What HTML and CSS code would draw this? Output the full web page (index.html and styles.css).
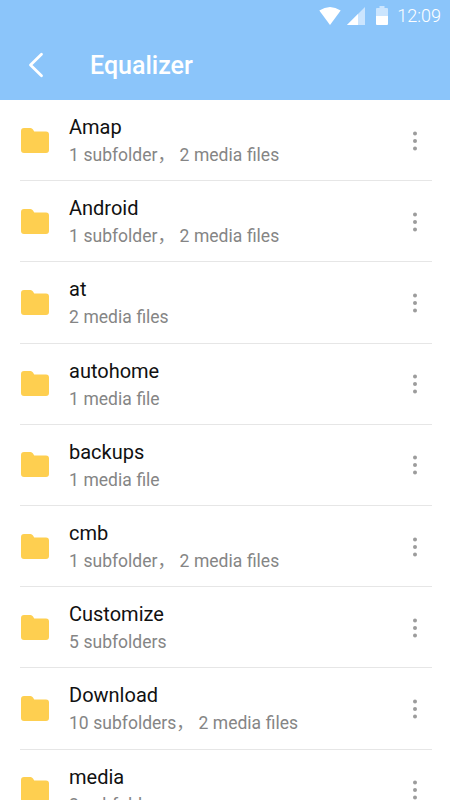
FILE: index.html
```html
<!DOCTYPE html>
<html lang="en">

<head>
    <meta charset="UTF-8">
    <meta name="viewport" content="width=device-width, initial-scale=1.0">
    <title>Equalizer</title>
    <link rel="stylesheet" href="styles.css">
</head>

<body>
    <svg class="symbols">
        <symbol id="folder" viewBox="0 0 28 25">
            <path d="M3 0H9.5Q11 0 12 1.5L13.2 3.4H25Q28 3.4 28 6.4V22Q28 25 25 25H3Q0 25 0 22V3Q0 0 3 0Z" fill="#fecf50" />
        </symbol>
        <symbol id="more" viewBox="0 0 6 20">
            <circle cx="3" cy="2.5" r="2" fill="#9c9c9c" />
            <circle cx="3" cy="10" r="2" fill="#9c9c9c" />
            <circle cx="3" cy="17.5" r="2" fill="#9c9c9c" />
        </symbol>
    </svg>
    <header class="header">
        <div class="status">
            <svg class="wifi" width="22" height="18" viewBox="0 0 22 18">
                <path d="M0.3 3.6Q11-3.4 21.7 3.6L11 18Z" fill="#fff" />
            </svg>
            <svg class="signal" width="18" height="18" viewBox="0 0 18 18">
                <path d="M0 18L18 0V18Z" fill="#cbe5fe" />
                <path d="M0 18L11 7V18Z" fill="#fff" />
            </svg>
            <svg class="battery" width="12" height="19" viewBox="0 0 12 19">
                <path d="M3.5 0H8.5V2H11Q12 2 12 3V10H0V3Q0 2 1 2H3.5Z" fill="#cbe5fe" />
                <path d="M0 10H12V18Q12 19 11 19H1Q0 19 0 18Z" fill="#fff" />
            </svg>
            <span class="time">12:09</span>
        </div>
        <div class="titleBar">
            <svg class="back" width="16" height="26" viewBox="0 0 16 26">
                <path d="M13.5 2.2L2.5 13L13.5 23.8" fill="none" stroke="#fff" stroke-width="2.8" stroke-linecap="round" stroke-linejoin="round" />
            </svg>
            <h1>Equalizer</h1>
        </div>
    </header>
    <ul class="folderList">
        <li>
            <svg class="folder"><use href="#folder" /></svg>
            <div class="info">
                <div class="name">Amap</div>
                <div class="count">1 subfolder， 2 media files</div>
            </div>
            <svg class="more"><use href="#more" /></svg>
        </li>
        <li>
            <svg class="folder"><use href="#folder" /></svg>
            <div class="info">
                <div class="name">Android</div>
                <div class="count">1 subfolder， 2 media files</div>
            </div>
            <svg class="more"><use href="#more" /></svg>
        </li>
        <li>
            <svg class="folder"><use href="#folder" /></svg>
            <div class="info">
                <div class="name">at</div>
                <div class="count">2 media files</div>
            </div>
            <svg class="more"><use href="#more" /></svg>
        </li>
        <li>
            <svg class="folder"><use href="#folder" /></svg>
            <div class="info">
                <div class="name">autohome</div>
                <div class="count">1 media file</div>
            </div>
            <svg class="more"><use href="#more" /></svg>
        </li>
        <li>
            <svg class="folder"><use href="#folder" /></svg>
            <div class="info">
                <div class="name">backups</div>
                <div class="count">1 media file</div>
            </div>
            <svg class="more"><use href="#more" /></svg>
        </li>
        <li>
            <svg class="folder"><use href="#folder" /></svg>
            <div class="info">
                <div class="name">cmb</div>
                <div class="count">1 subfolder， 2 media files</div>
            </div>
            <svg class="more"><use href="#more" /></svg>
        </li>
        <li>
            <svg class="folder"><use href="#folder" /></svg>
            <div class="info">
                <div class="name">Customize</div>
                <div class="count">5 subfolders</div>
            </div>
            <svg class="more"><use href="#more" /></svg>
        </li>
        <li>
            <svg class="folder"><use href="#folder" /></svg>
            <div class="info">
                <div class="name">Download</div>
                <div class="count">10 subfolders， 2 media files</div>
            </div>
            <svg class="more"><use href="#more" /></svg>
        </li>
        <li>
            <svg class="folder"><use href="#folder" /></svg>
            <div class="info">
                <div class="name">media</div>
                <div class="count">2 subfolders</div>
            </div>
            <svg class="more"><use href="#more" /></svg>
        </li>
    </ul>
</body>

</html>
```
FILE: styles.css
```css
body,
ul,
li,
h1 {
    padding: 0;
    margin: 0;
    list-style: none;
    font-weight: normal;
    box-sizing: border-box;
}

body {
    height: 800px;
    overflow: hidden;
    background: #fff;
    font-family: Roboto, "Noto Sans CJK SC", sans-serif;
}

.symbols {
    display: none;
}

.header {
    height: 100px;
    background: #8bc5fa;
    color: #fff;
}

.status {
    display: flex;
    align-items: center;
    justify-content: flex-end;
    height: 31px;
    padding-right: 9px;
}

.signal {
    margin-left: 6px;
}

.battery {
    margin: 0 9px 0 11px;
}

.time {
    font-size: 18px;
    font-weight: 300;
    line-height: 31px;
}

.titleBar {
    display: flex;
    align-items: center;
    height: 68px;
    padding-left: 28px;
}

.titleBar h1 {
    margin-left: 46px;
    font-size: 25px;
    font-weight: 500;
}

.folderList li {
    display: flex;
    align-items: center;
    height: 81.2px;
    margin: 0 18px 0 20px;
    border-bottom: 1px solid #e6e6e6;
}

.folder {
    width: 28px;
    height: 25px;
    margin-left: 1px;
}

.info {
    flex: 1;
    margin-left: 20px;
    padding-top: 2px;
}

.name {
    font-size: 20px;
    line-height: 28px;
    color: #111;
}

.count {
    font-size: 17.5px;
    line-height: 28px;
    word-spacing: 0.3px;
    color: #858585;
}

.more {
    width: 6px;
    height: 20px;
    margin: 1px 14px 0 0;
}
```
